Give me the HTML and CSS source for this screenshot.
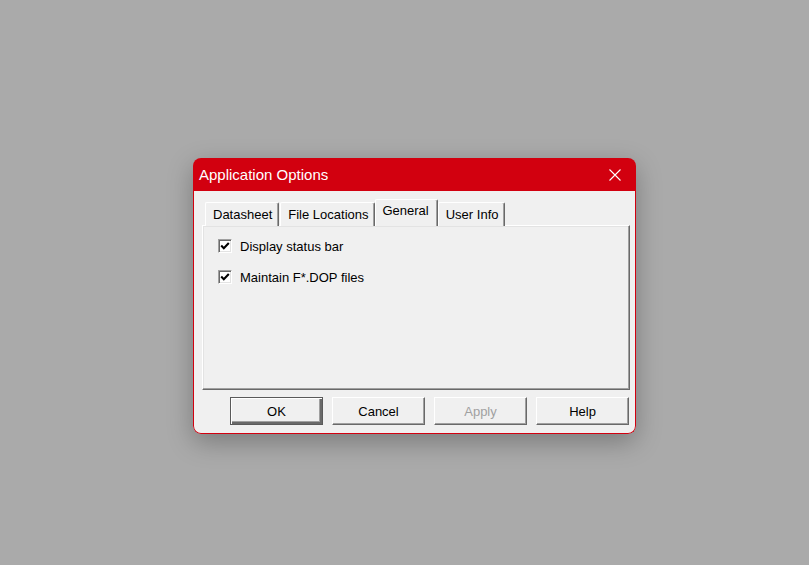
FILE: index.html
```html
<!DOCTYPE html>
<html lang="en">
<head>
    <meta charset="UTF-8">
    <title>Application Options</title>
    <link rel="stylesheet" href="styles.css">
</head>
<body>
    <div class="dialog">
        <div class="title-bar">
            <span class="title">Application Options</span>
            <button class="close-btn" aria-label="Close">
                <svg width="12" height="12" viewBox="0 0 12 12">
                    <path d="M0.5 0.5 L11.5 11.5 M11.5 0.5 L0.5 11.5" stroke="#fff" stroke-width="1.1" fill="none"/>
                </svg>
            </button>
        </div>

        <div class="dialog-body">
            <div class="tabs">
                <div class="tab">Datasheet</div>
                <div class="tab">File Locations</div>
                <div class="tab active">General</div>
                <div class="tab">User Info</div>
            </div>

            <div class="panel">
                <label class="check-row">
                    <span class="checkbox">
                        <svg width="10" height="10" viewBox="0 0 10 10">
                            <path d="M1.2 4.6 L3.8 7.2 L8.8 2" stroke="#000" stroke-width="2.1" fill="none"/>
                        </svg>
                    </span>
                    Display status bar
                </label>
                <label class="check-row">
                    <span class="checkbox">
                        <svg width="10" height="10" viewBox="0 0 10 10">
                            <path d="M1.2 4.6 L3.8 7.2 L8.8 2" stroke="#000" stroke-width="2.1" fill="none"/>
                        </svg>
                    </span>
                    Maintain F*.DOP files
                </label>
            </div>

            <div class="buttons">
                <button class="btn default">OK</button>
                <button class="btn">Cancel</button>
                <button class="btn" disabled>Apply</button>
                <button class="btn">Help</button>
            </div>
        </div>
    </div>
</body>
</html>
```

FILE: styles.css
```css
body {
    margin: 0;
    padding: 158px 0 0 193px;
    background: #aaaaaa;
    font-family: 'Liberation Sans', Arial, sans-serif;
    font-size: 13px;
    color: #000;
    height: 565px;
    box-sizing: border-box;
    overflow: hidden;
}

.dialog {
    width: 443px;
    border-radius: 8px;
    overflow: hidden;
    box-shadow: 0 8px 26px rgba(0, 0, 0, 0.28);
}

.title-bar {
    height: 33px;
    background: #d2000f;
    display: flex;
    align-items: center;
    justify-content: space-between;
    padding: 0 15px 0 6px;
}

.title {
    color: #fff;
    font-size: 15px;
}

.close-btn {
    background: none;
    border: none;
    padding: 0;
    width: 12px;
    height: 12px;
    display: flex;
}

.dialog-body {
    background: #f0f0f0;
    border: 1px solid #d2000f;
    border-top: none;
    border-radius: 0 0 8px 8px;
    padding: 8px 5px 8px 8px;
}

.tabs {
    display: flex;
    align-items: flex-end;
    padding-left: 3px;
    position: relative;
    z-index: 1;
    margin-bottom: -1px;
}

.tab {
    height: 23px;
    line-height: 24px;
    padding: 0 6px 0 7px;
    border-top: 1px solid #fff;
    border-left: 1px solid #fff;
    border-right: 1px solid #696969;
    box-shadow: inset -1px 0 #a0a0a0;
    border-radius: 2px 2px 0 0;
    margin-right: 1px;
    background: #f0f0f0;
}

.tab.active {
    height: 26px;
    line-height: 21px;
    margin: 0 -1px 0 -1px;
    padding: 0 8px 0 6px;
    position: relative;
}

.tab.active + .tab {
    margin-left: 1px;
}

.panel {
    height: 151px;
    border-top: 1px solid #fff;
    border-left: 1px solid #fff;
    border-right: 1px solid #696969;
    border-bottom: 1px solid #696969;
    box-shadow: inset -1px -1px #a0a0a0, inset 1px 1px #e3e3e3;
    padding: 12px 0 0 15px;
    display: flex;
    flex-direction: column;
    gap: 15px;
}

.check-row {
    display: flex;
    align-items: center;
    gap: 8px;
    height: 16px;
}

.checkbox {
    width: 10px;
    height: 10px;
    padding: 1px;
    background: #fff;
    border-top: 1px solid #a0a0a0;
    border-left: 1px solid #a0a0a0;
    border-right: 1px solid #fff;
    border-bottom: 1px solid #fff;
    box-shadow: inset 1px 1px #696969, inset -1px -1px #e3e3e3;
    display: flex;
    align-items: center;
    justify-content: center;
}

.buttons {
    display: flex;
    justify-content: flex-end;
    gap: 9px;
    margin-top: 7px;
    padding-right: 1px;
}

.btn {
    width: 93px;
    height: 28px;
    font-family: inherit;
    font-size: 13px;
    background: #f0f0f0;
    color: #000;
    border-top: 1px solid #fff;
    border-left: 1px solid #fff;
    border-right: 1px solid #696969;
    border-bottom: 1px solid #696969;
    box-shadow: inset -1px -1px #a0a0a0;
    padding: 0;
}

.btn.default {
    border: 1px solid #5a5a5a;
    box-shadow: inset 1px 1px #fff, inset -2px -2px #696969, inset -3px -3px #a0a0a0;
}

.btn:disabled {
    color: #a0a0a0;
}
```
